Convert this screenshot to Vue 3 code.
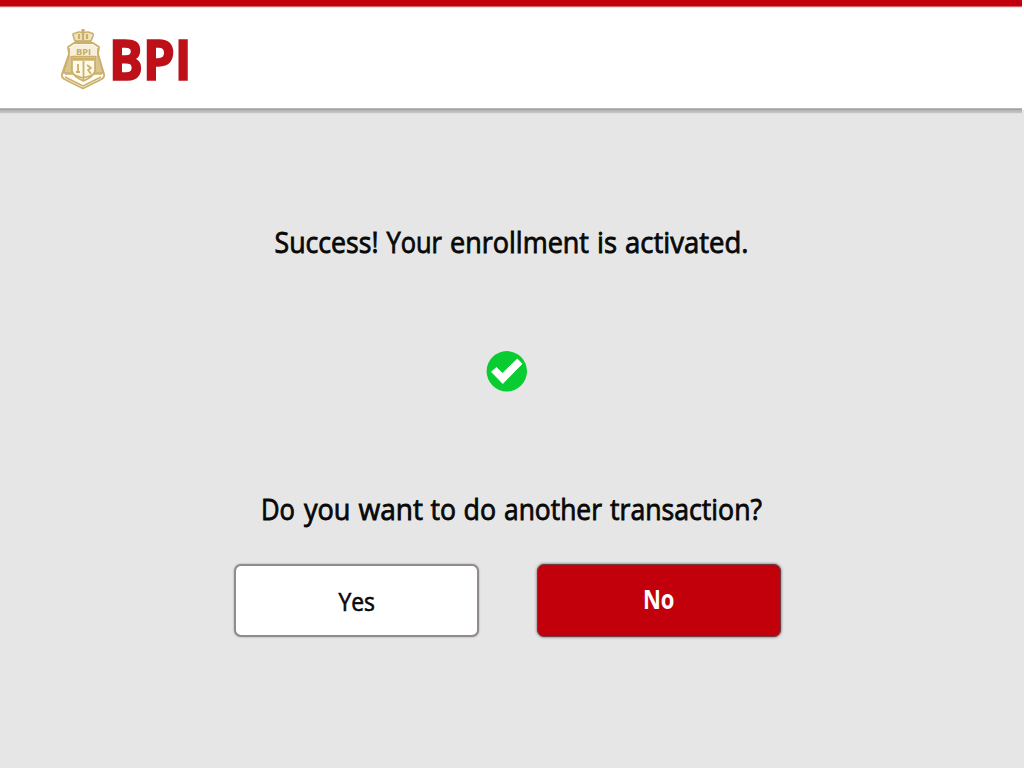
<script setup>
const successWords = [
  { t: 'Success!', x: 274.5, w: 104 },
  { t: 'Your', x: 386.5, w: 55.5 },
  { t: 'enrollment', x: 450, w: 139 },
  { t: 'is', x: 597, w: 20 },
  { t: 'activated.', x: 625, w: 123.5 }
]
const questionWords = [
  { t: 'Do', x: 261, w: 34 },
  { t: 'you', x: 304, w: 46.5 },
  { t: 'want', x: 358.5, w: 64.5 },
  { t: 'to', x: 430.5, w: 25.5 },
  { t: 'do', x: 463.5, w: 32.5 },
  { t: 'another', x: 504, w: 98 },
  { t: 'transaction?', x: 610, w: 152 }
]
</script>

<template>
  <div class="screen">
    <header class="header">
      <svg class="logo" width="140" height="74" viewBox="56 24 140 74">
        <g fill="none" stroke="#cbb06c" stroke-linejoin="round">
          <path d="M75 41 L73 35 Q73 33 76 33 Q79 31 83 33 Q88 31 91 33 Q94 33 93 36 L91 41 Z" fill="#f0e3bd" stroke-width="1.6" />
          <path d="M75 41.5 H91 M83 29 V40 M81.2 30.5 H84.8 M79 34 V39 M87 34 V39" stroke-width="2.2" />
          <path d="M68 47 L74 43 H93 L99 47 L98 54 L104 74 Q105 78 100 80 L83 88.5 L66 80 Q61 78 62 74 L69 54 Z" fill="#fffdf6" stroke-width="1.8" />
          <path d="M69 48 V55 L63.5 73 H72 V56 M98 48 V55 L103 73 H95 V56" fill="#d9c58d" stroke-width="1.3" />
          <path d="M70 47.5 L75 44.5 H92 L97 47.5 V56 H70 Z" fill="#f7efd9" stroke="none" />
          <path d="M65 74 H73 M94 74 H102 M65 77 L83 86 L101 77" stroke-width="1.5" />
          <path d="M72 56.5 H95 V71 Q94 76 83.5 81 Q73 76 72 71 Z" fill="#fff9e8" stroke-width="1.7" />
          <path d="M73 59 H94" stroke-width="3.4" />
          <path d="M83.5 61 V80 M78 64 V73 M76 72 H80 M87 65 L91 68 L88 70 L91 74 M74 75 L83 78 L93 75" stroke-width="1.8" />
        </g>
        <text class="crest" x="76" y="54.5" textLength="15" lengthAdjust="spacingAndGlyphs">BPI</text>
        <text class="brand" x="109" y="80.3" textLength="82.5" lengthAdjust="spacingAndGlyphs">BPI</text>
      </svg>
    </header>
    <main>
      <svg class="line success" width="1024" height="50" viewBox="0 220 1024 50">
        <text v-for="w in successWords" :key="w.t" :x="w.x" y="253.3" :textLength="w.w" lengthAdjust="spacingAndGlyphs">{{ w.t }}</text>
      </svg>
      <svg class="check" width="44" height="44" viewBox="485 349 44 44">
        <circle cx="506.8" cy="371.3" r="20.2" fill="#08cc32" />
        <path d="M491.5 371.8 L496.5 367.5 L502.5 373.3 L517.3 359 L522 363.8 L502.8 383.5 Z" fill="#fff" stroke="#fff" stroke-width=".9" stroke-linejoin="round" />
      </svg>
      <svg class="line question" width="1024" height="50" viewBox="0 485 1024 50">
        <text v-for="w in questionWords" :key="w.t" :x="w.x" y="520.2" :textLength="w.w" lengthAdjust="spacingAndGlyphs">{{ w.t }}</text>
      </svg>
      <div class="actions">
        <button class="btn yes">
          <svg width="241" height="69" viewBox="236 566 241 69"><text x="338.5" y="610.5" textLength="36.5" lengthAdjust="spacingAndGlyphs">Yes</text></svg>
        </button>
        <button class="btn no">
          <svg width="240" height="69" viewBox="539 566 240 69"><text x="643" y="608.5" textLength="31.5" lengthAdjust="spacingAndGlyphs">No</text></svg>
        </button>
      </div>
    </main>
  </div>
</template>

<style>
body { margin: 0; background: #e6e6e6; }
</style>
<style scoped>
.screen { width: 1024px; height: 768px; overflow: hidden; background: #e6e6e6; font-family: "Open Sans", "Noto Sans", sans-serif; }
.header {
  box-sizing: border-box; height: 114px; padding: 24px 0 0 56px;
  background:
    linear-gradient(#fff 0 110px, #e6e6e6 110px) right top / 2px 114px no-repeat,
    linear-gradient(#c1000b 0 6px, #d8636a 6px 7px, #f3dddf 7px 8px, #fff 8px 108px, #b9bbba 108px 109px, #a0a0a0 109px 110px, #b8b8b8 110px 111px, #bdbdbd 111px 112px, #c4c4c4 112px 113px, #dfdfdf 113px);
}
svg { display: block; overflow: visible; }
.brand { font-size: 55px; font-weight: 700; fill: #bd1019; stroke: #bd1019; stroke-width: 1.7px; }
.crest { font-size: 8px; font-weight: 700; fill: #c5aa65; }
.line text { font-size: 30px; font-weight: 500; fill: #080808; stroke: #080808; stroke-width: .85px; }
.success { margin-top: 106px; }
.check { margin: 79px 0 0 485px; }
.question { margin-top: 92px; }
.actions { display: flex; gap: 58px; padding: 29px 0 0 234px; }
.btn { box-sizing: border-box; width: 245px; height: 73px; padding: 0; border: 2px solid #918b8d; border-radius: 7px; box-shadow: 0 0 2px #999; font-family: inherit; }
.yes { background: #fff; }
.yes text { font-size: 25px; font-weight: 500; fill: #080808; stroke: #080808; stroke-width: .6px; }
.no { width: 244px; border: 1px solid #713b40; padding: 1px; background: #c1000b; box-shadow: 0 0 3px #555; }
.no text { font-size: 26px; font-weight: 700; fill: #fff; }
</style>
